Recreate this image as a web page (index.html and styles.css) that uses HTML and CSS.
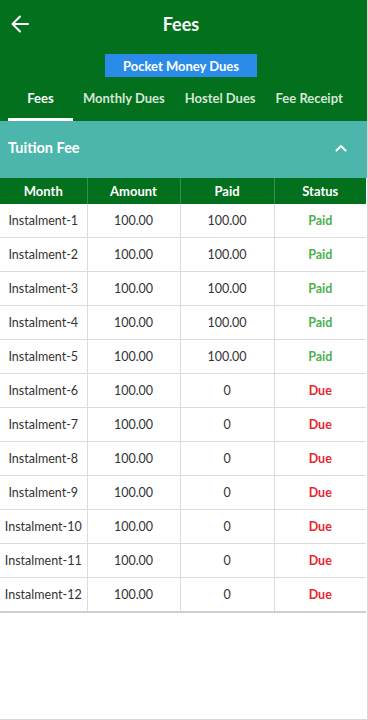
FILE: index.html
```html
<!DOCTYPE html>
<html lang="en">
<head>
    <meta charset="UTF-8">
    <meta name="viewport" content="width=device-width, initial-scale=1.0">
    <title>Fees</title>
    <link rel="stylesheet" href="styles.css">
</head>
<body>
    <div class="app">
        <div class="header">
            <div class="topbar">
                <span class="back">
                    <svg width="18" height="18" viewBox="0 0 18 18"><path d="M17 9H2M9 1.5L1.5 9 9 16.5" fill="none" stroke="#fff" stroke-width="2" stroke-linecap="round" stroke-linejoin="round"/></svg>
                </span>
                <h1>Fees</h1>
            </div>
            <div class="pocket-row">
                <button class="btn-pocket">Pocket Money Dues</button>
            </div>
            <div class="tabs">
                <div class="tab active">Fees</div>
                <div class="tab">Monthly Dues</div>
                <div class="tab">Hostel Dues</div>
                <div class="tab">Fee Receipt</div>
            </div>
        </div>

        <div class="section-head">
            <span>Tuition Fee</span>
            <svg width="12" height="8" viewBox="0 0 12 8"><path d="M1.5 6.5L6 2l4.5 4.5" fill="none" stroke="#fff" stroke-width="2" stroke-linecap="round" stroke-linejoin="round"/></svg>
        </div>

        <table class="fee-table">
            <colgroup>
                <col class="col-month">
                <col class="col-amount">
                <col class="col-paid">
                <col class="col-status">
            </colgroup>
            <thead>
                <tr><th>Month</th><th>Amount</th><th>Paid</th><th>Status</th></tr>
            </thead>
            <tbody>
                <tr><td>Instalment-1</td><td>100.00</td><td>100.00</td><td class="paid">Paid</td></tr>
                <tr><td>Instalment-2</td><td>100.00</td><td>100.00</td><td class="paid">Paid</td></tr>
                <tr><td>Instalment-3</td><td>100.00</td><td>100.00</td><td class="paid">Paid</td></tr>
                <tr><td>Instalment-4</td><td>100.00</td><td>100.00</td><td class="paid">Paid</td></tr>
                <tr><td>Instalment-5</td><td>100.00</td><td>100.00</td><td class="paid">Paid</td></tr>
                <tr><td>Instalment-6</td><td>100.00</td><td>0</td><td class="due">Due</td></tr>
                <tr><td>Instalment-7</td><td>100.00</td><td>0</td><td class="due">Due</td></tr>
                <tr><td>Instalment-8</td><td>100.00</td><td>0</td><td class="due">Due</td></tr>
                <tr><td>Instalment-9</td><td>100.00</td><td>0</td><td class="due">Due</td></tr>
                <tr><td>Instalment-10</td><td>100.00</td><td>0</td><td class="due">Due</td></tr>
                <tr><td>Instalment-11</td><td>100.00</td><td>0</td><td class="due">Due</td></tr>
                <tr><td>Instalment-12</td><td>100.00</td><td>0</td><td class="due">Due</td></tr>
            </tbody>
        </table>
    </div>
</body>
</html>
```

FILE: styles.css
```css
body {
    margin: 0;
    font-family: Lato, "Open Sans", sans-serif;
    background-color: #fff;
    color: #333;
}
.app {
    width: 367px;
    height: 719px;
    border-right: 1px solid #d8d8d8;
    border-bottom: 1px solid #d8d8d8;
    overflow: hidden;
}
.header {
    background-color: #02701c;
    color: #fff;
}
.topbar {
    height: 48px;
    display: flex;
    align-items: center;
    justify-content: center;
    position: relative;
    padding-right: 5px;
}
.back {
    position: absolute;
    left: 11px;
    top: 15px;
    display: flex;
}
.topbar h1 {
    margin: 0;
    font-size: 18px;
    font-weight: bold;
}
.pocket-row {
    display: flex;
    justify-content: center;
    padding-top: 6px;
    padding-right: 5px;
}
.btn-pocket {
    width: 152px;
    height: 23px;
    border: none;
    background-color: #2a8ce8;
    color: #fff;
    font-family: inherit;
    font-size: 13px;
    font-weight: bold;
    padding: 0;
}
.tabs {
    display: flex;
    height: 44px;
    padding-left: 8px;
}
.tab {
    display: flex;
    align-items: center;
    justify-content: center;
    font-size: 13px;
    font-weight: bold;
    color: #d6e6d6;
    padding: 0 10px;
    border-bottom: 3px solid transparent;
    box-sizing: border-box;
}
.tab:first-child {
    width: 65px;
}
.tab.active {
    color: #fff;
    border-bottom-color: #fff;
}
.section-head {
    height: 57px;
    box-sizing: border-box;
    background-color: #4db6ac;
    color: #fff;
    display: flex;
    align-items: center;
    justify-content: space-between;
    padding: 0 20px 4px 8px;
    font-size: 14.5px;
    font-weight: bold;
}
.fee-table {
    width: 366px;
    table-layout: fixed;
    border-collapse: collapse;
    font-size: 12.5px;
}
.col-month {
    width: 87px;
}
.col-amount {
    width: 93px;
}
.col-paid {
    width: 94px;
}
.col-status {
    width: 92px;
}
.fee-table th {
    height: 26px;
    background-color: #02701c;
    color: #fff;
    font-size: 13px;
    font-weight: bold;
    border-left: 1px solid #3a9048;
    padding: 0;
}
.fee-table td {
    height: 33px;
    text-align: center;
    border-left: 1px solid #dcdcdc;
    border-bottom: 1px solid #dcdcdc;
    padding: 0;
    white-space: nowrap;
}
.fee-table th:first-child,
.fee-table td:first-child {
    border-left: none;
}
.fee-table tbody tr:last-child td {
    border-bottom: 2px solid #cfcfcf;
}
.paid {
    color: #4caf50;
    font-weight: bold;
}
.due {
    color: #e8262e;
    font-weight: bold;
}
```
